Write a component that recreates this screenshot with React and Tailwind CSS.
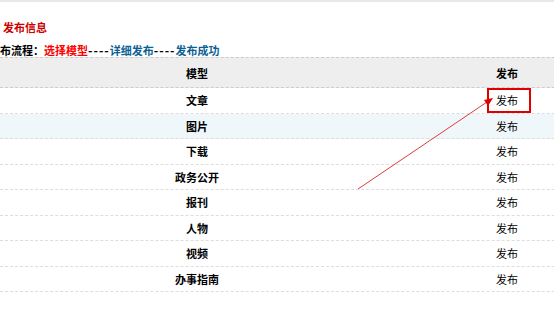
const rows = ["文章", "图片", "下载", "政务公开", "报刊", "人物", "视频", "办事指南"];

export default function App() {
  return (
    <div
      className="relative w-[554px] h-[323px] overflow-hidden bg-white text-[11px] leading-[14px] text-black"
      style={{ fontFamily: '"Noto Sans CJK SC", "Liberation Sans", sans-serif' }}
    >
      <div className="h-[2px] bg-[#e8e8e8]" />
      <div className="pl-[3px] pt-[18px] font-bold text-[#cc0000]">发布信息</div>
      <div className="mt-[9px] font-bold whitespace-nowrap">
        <span>布流程：</span>
        <span className="text-[#ff0000]">选择模型</span>
        <span className="text-[12px] tracking-[1px]">----</span>
        <span className="text-[#0b5f94]">详细发布</span>
        <span className="text-[12px] tracking-[1px]">----</span>
        <span className="text-[#0b5f94]">发布成功</span>
      </div>

      <div className="w-[620px]">
        <div className="flex h-[31px] items-center bg-[#eeeeee] border-y border-dashed border-[#cccccc] font-bold">
          <div className="w-[394px] text-center">模型</div>
          <div className="w-[226px] text-center">发布</div>
        </div>
        {rows.map((name, i) => (
          <div
            key={name}
            className={
              "flex h-[25.5px] items-center border-b border-dashed border-[#dddddd] " +
              (i === 1 ? "bg-[#f0f7fb]" : "bg-white")
            }
          >
            <div className="w-[394px] text-center font-bold">{name}</div>
            <div className="w-[226px] flex justify-center">
              {i === 0 ? (
                <span className="-ml-[8px] -mr-[12px] pl-[7px] pr-[11px] h-[25px] flex items-center border-2 border-[#e00000]">
                  发布
                </span>
              ) : (
                <span>发布</span>
              )}
            </div>
          </div>
        ))}
      </div>

      <svg className="absolute left-0 top-0 pointer-events-none" width="554" height="323">
        <line x1="358" y1="189" x2="487" y2="102" stroke="#e23a3a" strokeWidth="1" />
        <polygon points="493,98 484,100 488,106" fill="#e00000" />
      </svg>
    </div>
  );
}
